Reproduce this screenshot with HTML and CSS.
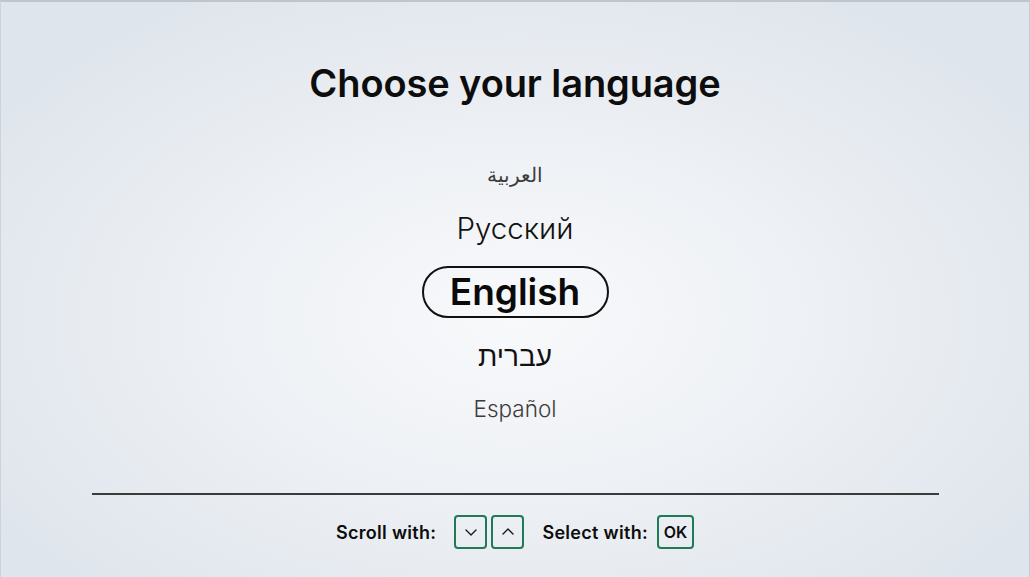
FILE: index.html
```html
<!DOCTYPE html>
<html lang="en">
<head>
  <meta charset="UTF-8">
  <meta name="viewport" content="width=device-width, initial-scale=1.0">
  <title>Choose your language</title>
  <link rel="stylesheet" href="styles.css">
</head>
<body>
  <div class="screen">
    <h1 class="title">Choose your language</h1>

    <ul class="languages">
      <li class="lang lang-far"><span class="arabic">ةيبرعلا</span></li>
      <li class="lang lang-near">Русский</li>
      <li class="lang lang-active">English</li>
      <li class="lang lang-near" dir="rtl">עברית</li>
      <li class="lang lang-far">Español</li>
    </ul>

    <div class="divider"></div>

    <div class="hints">
      <span class="hint">Scroll with:</span>
      <span class="key">
        <svg width="14" height="14" viewBox="0 0 14 14"><path d="M2 5 L7 10 L12 5" fill="none" stroke="#1a1a1a" stroke-width="1.4" stroke-linecap="round" stroke-linejoin="round"/></svg>
      </span>
      <span class="key">
        <svg width="14" height="14" viewBox="0 0 14 14"><path d="M2 9 L7 4 L12 9" fill="none" stroke="#1a1a1a" stroke-width="1.4" stroke-linecap="round" stroke-linejoin="round"/></svg>
      </span>
      <span class="hint hint-select">Select with:</span>
      <span class="key key-ok">OK</span>
    </div>
  </div>
</body>
</html>
```

FILE: styles.css
```css
html, body {
  margin: 0;
  padding: 0;
  height: 100%;
}

body {
  font-family: 'Inter', 'Noto Sans', 'DejaVu Sans', sans-serif;
  color: #0d0d0d;
  background: radial-gradient(ellipse 60% 65% at 50% 55%, #f8f9fb 0%, #eef1f5 45%, #dfe5ec 100%);
}

.screen {
  height: 100vh;
  box-sizing: border-box;
  border-top: 2px solid #c2c4c7;
  border-left: 1px solid #cfd3d8;
  border-right: 1px solid #c8ccd1;
  display: flex;
  flex-direction: column;
  align-items: center;
}

.title {
  margin: 59px 0 0;
  font-size: 38px;
  line-height: 44px;
  font-weight: 600;
  letter-spacing: -0.1px;
}

.languages {
  list-style: none;
  margin: 54px 0 0;
  padding: 0;
  display: flex;
  flex-direction: column;
  align-items: center;
  gap: 18px;
}

.lang {
  text-align: center;
}

.lang-far {
  font-size: 22.5px;
  line-height: 30px;
  color: #3c3c3c;
  font-weight: 300;
}

.arabic {
  font-family: 'DejaVu Sans', sans-serif;
  font-size: 20px;
  direction: ltr;
  unicode-bidi: bidi-override;
}

.lang-near {
  font-size: 29.5px;
  line-height: 40px;
  color: #111;
  font-weight: 300;
}

.lang-near[dir="rtl"] {
  font-size: 28px;
}

.lang-active {
  box-sizing: border-box;
  height: 52px;
  width: 187px;
  border: 2px solid #111;
  border-radius: 26px;
  font-size: 37px;
  line-height: 48px;
  font-weight: 600;
  color: #0a0a0a;
}

.divider {
  margin-top: 69px;
  width: 847px;
  height: 2px;
  background: #3b3b3b;
}

.hints {
  margin-top: 20px;
  display: flex;
  align-items: center;
  font-size: 18px;
  font-weight: 600;
  letter-spacing: 0.3px;
}

.hint {
  margin-right: 18px;
}

.hint-select {
  margin-left: 18px;
  margin-right: 9px;
}

.key {
  box-sizing: border-box;
  width: 33px;
  height: 34px;
  border: 2px solid #1f7a57;
  border-radius: 4px;
  display: flex;
  align-items: center;
  justify-content: center;
}

.key + .key {
  margin-left: 4px;
}

.key-ok {
  width: 37px;
  font-size: 16px;
  font-weight: 600;
  letter-spacing: 0;
}
```
